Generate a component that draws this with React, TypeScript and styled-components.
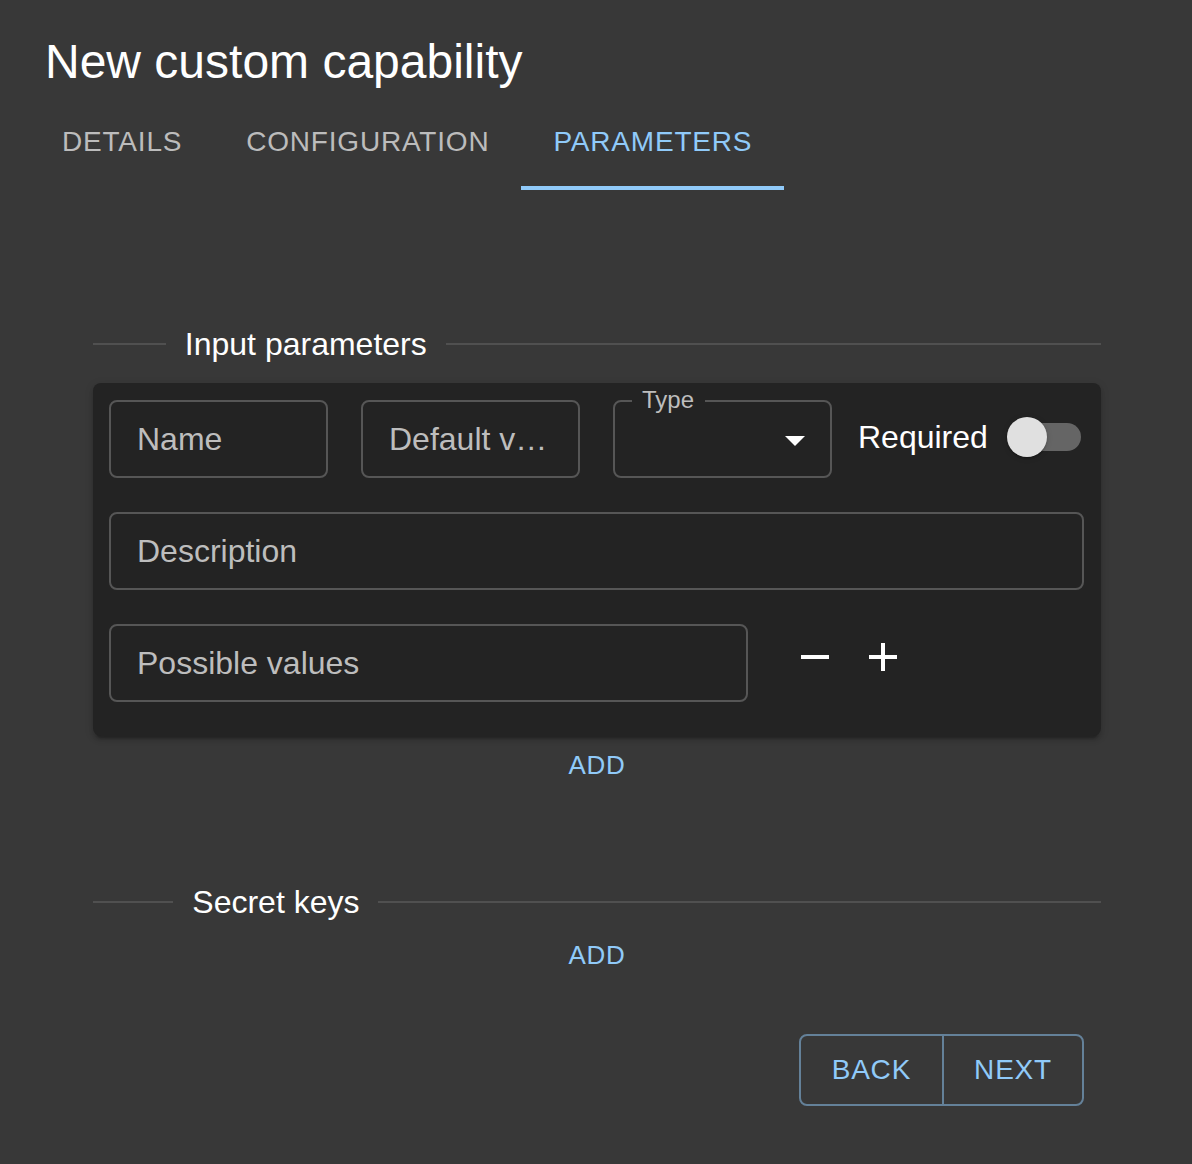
import React from "react";
import styled, { createGlobalStyle } from "styled-components";

const GlobalStyle = createGlobalStyle`
  html, body {
    margin: 0;
    padding: 0;
    background: #383838;
    font-family: "Liberation Sans", Arial, Helvetica, sans-serif;
  }
  * { box-sizing: border-box; }
`;

const BLUE = "#90caf9";

const Page = styled.div`
  background: #383838;
  padding: 30px 0 58px;
  min-height: 1164px;
`;

const Title = styled.h1`
  margin: 0;
  padding: 0 45px;
  font-size: 48px;
  line-height: 64px;
  font-weight: 400;
  color: #ffffff;
  letter-spacing: 0;
`;

const TabBar = styled.div`
  display: flex;
  padding-left: 30px;
  height: 96px;
`;

const Tab = styled.div<{ $active?: boolean }>`
  display: flex;
  align-items: center;
  justify-content: center;
  padding: 0 32px;
  height: 96px;
  font-size: 28px;
  letter-spacing: 0.8px;
  text-transform: uppercase;
  color: ${(p) => (p.$active ? BLUE : "#bcbcbc")};
  box-shadow: ${(p) => (p.$active ? `inset 0 -4px 0 ${BLUE}` : "none")};
`;

const Content = styled.div`
  width: 1008px;
  margin: 130px 0 0 93px;
`;

const SectionDivider = styled.div<{ $top?: number }>`
  display: flex;
  align-items: center;
  height: 48px;
  margin-top: ${(p) => p.$top ?? 0}px;
  &::before,
  &::after {
    content: "";
    border-top: 2px solid #505050;
  }
  &::before {
    flex: 0 1 10%;
  }
  &::after {
    flex: 0 1 90%;
  }
`;

const DividerText = styled.span`
  padding: 0 19px;
  font-size: 32px;
  line-height: 48px;
  color: #ffffff;
  white-space: nowrap;
`;

const Card = styled.div`
  margin-top: 15px;
  background: #232323;
  border-radius: 8px;
  box-shadow: 0 6px 2px -4px rgba(0, 0, 0, 0.2), 0 4px 4px 0 rgba(0, 0, 0, 0.14),
    0 2px 10px 0 rgba(0, 0, 0, 0.12);
  padding: 17px 16px 34px;
  display: flex;
  flex-direction: column;
  gap: 34px;
`;

const Row = styled.div`
  display: flex;
  align-items: center;
  gap: 33px;
`;

const Field = styled.div<{ $w: number }>`
  position: relative;
  flex: 0 0 ${(p) => p.$w}px;
  width: ${(p) => p.$w}px;
  height: 78px;
  border: 2px solid #565656;
  border-radius: 8px;
  padding: 0 26px;
  display: flex;
  align-items: center;
`;

const Placeholder = styled.span`
  font-size: 32px;
  color: #bdbdbd;
  white-space: nowrap;
  overflow: hidden;
  text-overflow: ellipsis;
`;

const FloatLabel = styled.span`
  position: absolute;
  left: 17px;
  top: -16px;
  padding: 0 11px 0 10px;
  background: #232323;
  font-size: 24px;
  line-height: 28px;
  color: #bdbdbd;
`;

const Arrow = styled.svg`
  position: absolute;
  right: 11px;
  top: 14px;
  width: 48px;
  height: 48px;
`;

const RequiredGroup = styled.div`
  display: flex;
  align-items: center;
  gap: 19px;
  margin-left: -7px;
  margin-top: -4px;
`;

const RequiredText = styled.span`
  font-size: 32px;
  color: #ffffff;
`;

const SwitchTrack = styled.div`
  position: relative;
  width: 74px;
  height: 40px;
  &::before {
    content: "";
    position: absolute;
    left: 6px;
    top: 6px;
    width: 68px;
    height: 28px;
    border-radius: 14px;
    background: #656565;
  }
`;

const SwitchThumb = styled.div`
  position: absolute;
  left: 0;
  top: 0;
  width: 40px;
  height: 40px;
  border-radius: 50%;
  background: #e0e0e0;
  box-shadow: 0 2px 2px -1px rgba(0, 0, 0, 0.2), 0 1px 2px 0 rgba(0, 0, 0, 0.14),
    0 1px 6px 0 rgba(0, 0, 0, 0.12);
`;

const IconButton = styled.div`
  width: 68px;
  height: 68px;
  display: flex;
  align-items: center;
  justify-content: center;
`;

const IconGroup = styled.div`
  display: flex;
  align-items: center;
  margin-top: -12px;
`;

const AddRow = styled.div`
  display: flex;
  justify-content: center;
`;

const AddButton = styled.div`
  padding: 7px 10px 6px;
  font-size: 26px;
  line-height: 45px;
  letter-spacing: 0.7px;
  color: ${BLUE};
  text-transform: uppercase;
`;

const Footer = styled.div`
  display: flex;
  justify-content: flex-end;
  padding-right: 17px;
  margin-top: 50px;
`;

const ButtonGroup = styled.div`
  display: flex;
  border: 2px solid rgba(144, 202, 249, 0.5);
  border-radius: 8px;
`;

const GroupButton = styled.div<{ $divider?: boolean }>`
  height: 68px;
  display: flex;
  align-items: center;
  padding: 0 ${(p) => (p.$divider ? 30 : 31)}px;
  font-size: 28px;
  letter-spacing: 0.8px;
  color: ${BLUE};
  border-left: ${(p) => (p.$divider ? "2px solid rgba(144, 202, 249, 0.5)" : "none")};
`;

const MinusIcon = () => (
  <svg width="48" height="48" viewBox="0 0 24 24">
    <path d="M19 13H5v-2h14v2z" fill="#ffffff" />
  </svg>
);

const PlusIcon = () => (
  <svg width="48" height="48" viewBox="0 0 24 24">
    <path d="M19 13h-6v6h-2v-6H5v-2h6V5h2v6h6v2z" fill="#ffffff" />
  </svg>
);

export default function App() {
  return (
    <>
      <GlobalStyle />
      <Page>
        <Title>New custom capability</Title>
        <TabBar>
          <Tab>Details</Tab>
          <Tab>Configuration</Tab>
          <Tab $active>Parameters</Tab>
        </TabBar>
        <Content>
          <SectionDivider>
            <DividerText>Input parameters</DividerText>
          </SectionDivider>
          <Card>
            <Row>
              <Field $w={219}>
                <Placeholder>Name</Placeholder>
              </Field>
              <Field $w={219}>
                <Placeholder>Default value</Placeholder>
              </Field>
              <Field $w={219}>
                <FloatLabel>Type</FloatLabel>
                <Arrow viewBox="0 0 24 24">
                  <path d="M7 10l5 5 5-5z" fill="#ffffff" />
                </Arrow>
              </Field>
              <RequiredGroup>
                <RequiredText>Required</RequiredText>
                <SwitchTrack>
                  <SwitchThumb />
                </SwitchTrack>
              </RequiredGroup>
            </Row>
            <Row>
              <Field $w={975}>
                <Placeholder>Description</Placeholder>
              </Field>
            </Row>
            <Row>
              <Field $w={639}>
                <Placeholder>Possible values</Placeholder>
              </Field>
              <IconGroup>
                <IconButton>
                  <MinusIcon />
                </IconButton>
                <IconButton>
                  <PlusIcon />
                </IconButton>
              </IconGroup>
            </Row>
          </Card>
          <AddRow>
            <AddButton>Add</AddButton>
          </AddRow>
          <SectionDivider $top={84}>
            <DividerText>Secret keys</DividerText>
          </SectionDivider>
          <AddRow>
            <AddButton>Add</AddButton>
          </AddRow>
          <Footer>
            <ButtonGroup>
              <GroupButton>BACK</GroupButton>
              <GroupButton $divider>NEXT</GroupButton>
            </ButtonGroup>
          </Footer>
        </Content>
      </Page>
    </>
  );
}
